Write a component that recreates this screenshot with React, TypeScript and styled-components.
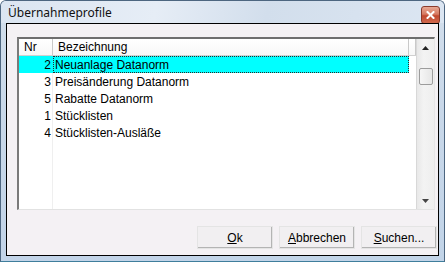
import React from 'react';
import styled, { createGlobalStyle } from 'styled-components';

const GlobalStyle = createGlobalStyle`
  html, body {
    margin: 0;
    padding: 0;
    background: #ffffff;
  }
  body {
    font-family: "Liberation Sans", Arial, sans-serif;
    font-size: 12px;
    color: #000;
  }
`;

const Window = styled.div`
  box-sizing: border-box;
  width: 445px;
  height: 262px;
  display: flex;
  flex-direction: column;
  border: 1px solid #4d6680;
  border-bottom-color: #3f7e9c;
  border-radius: 6px 6px 0 0;
  background: linear-gradient(to bottom, #d3dfec 0%, #c9d8e9 40%, #c2d4e8 100%);
`;

const TitleBar = styled.div`
  height: 22px;
  display: flex;
  align-items: center;
  padding: 0 4px 0 7px;
  background: linear-gradient(100deg, #dbe5f1 0%, #e6edf6 35%, #d2deec 60%, #dce6f2 100%);
  border-radius: 5px 5px 0 0;
`;

const Title = styled.span`
  font-family: "Noto Sans", "Open Sans", sans-serif;
  font-size: 12px;
  color: #111;
  margin-top: 1px;
`;

const CloseButton = styled.div`
  margin-left: auto;
  width: 17px;
  height: 16px;
  margin-top: 5px;
  display: flex;
  align-items: center;
  justify-content: center;
  border: 1px solid #8a3b2c;
  border-radius: 3px;
  background: linear-gradient(to bottom, #e7a893 0%, #d77a62 45%, #c2482f 55%, #d0694d 100%);
`;

const Client = styled.div`
  flex: 1;
  display: flex;
  flex-direction: column;
  margin: 0 5px 5px 5px;
  border: 1px solid #000;
  background: #f4f1f4;
  padding: 13px 0 6px 10px;
`;

const ListBox = styled.div`
  box-sizing: border-box;
  width: 418px;
  height: 173px;
  display: flex;
  border-style: solid;
  border-width: 2px 1px 1px 2px;
  border-color: #6e6e6e #e6e6e6 #e2e2e2 #7a7a7a;
  background: #fff;
`;

const ListArea = styled.div`
  flex: 1;
  display: flex;
  flex-direction: column;
  background:
    linear-gradient(to right, transparent 33px, #efefef 33px, #efefef 34px, transparent 34px);
`;

const Header = styled.div`
  display: flex;
  height: 16px;
  border-bottom: 1px solid #d0d0d0;
  background: linear-gradient(to bottom, #ffffff 0%, #f7f7f7 100%);
`;

const HeaderCell = styled.div<{ $w?: number; $grow?: boolean }>`
  box-sizing: border-box;
  ${(p) => (p.$grow ? 'flex: 1;' : `width: ${p.$w}px;`)}
  height: 16px;
  line-height: 16px;
  padding-left: 5px;
  border-right: 1px solid #c9c9c9;
  white-space: nowrap;
  overflow: hidden;
`;

const Row = styled.div<{ $selected?: boolean }>`
  display: flex;
  height: 17px;
  width: 390px;
  background: ${(p) => (p.$selected ? '#00ffff' : 'transparent')};
`;

const NrCell = styled.div`
  box-sizing: border-box;
  width: 34px;
  height: 17px;
  line-height: 17px;
  padding: 1px 2px 0 0;
  text-align: right;
`;

const NameCell = styled.div<{ $focus?: boolean }>`
  box-sizing: border-box;
  flex: 1;
  height: 17px;
  line-height: 15px;
  padding: 1px 0 0 1px;
  border: 1px dotted ${(p) => (p.$focus ? '#2a2a2a' : 'transparent')};
  white-space: nowrap;
`;

const ScrollBar = styled.div`
  width: 17px;
  display: flex;
  flex-direction: column;
  background: linear-gradient(to right, #e8e8e8 0%, #f3f3f3 40%, #eeeeee 100%);
  border-left: 1px solid #d8d8d8;
`;

const ArrowButton = styled.div`
  height: 17px;
  display: flex;
  align-items: center;
  justify-content: center;
`;

const Thumb = styled.div`
  margin: 12px 1px 0 2px;
  height: 15px;
  border: 1px solid #9c9c9c;
  border-radius: 2px;
  background: linear-gradient(to right, #f6f6f6 0%, #e6e6e6 100%);
`;

const Spacer = styled.div`
  flex: 1;
`;

const ButtonRow = styled.div`
  margin-top: 16px;
  margin-right: 1px;
  display: flex;
  justify-content: flex-end;
  gap: 6px;
`;

const Button = styled.button`
  box-sizing: border-box;
  width: 76px;
  height: 23px;
  padding: 0;
  font-family: "Liberation Sans", Arial, sans-serif;
  font-size: 12px;
  color: #000;
  background: #f1eff1;
  border-style: solid;
  border-width: 1px;
  border-color: #ffffff #6f6f6f #6f6f6f #ffffff;
  box-shadow: inset -1px -1px 0 #b4b4b4, 0 0 0 0 transparent;
  outline: 1px solid #e4e4e4;
  outline-offset: -1px;
`;

const Key = styled.u`
  text-decoration: underline;
`;

const rows = [
  { nr: 2, name: 'Neuanlage Datanorm' },
  { nr: 3, name: 'Preisänderung Datanorm' },
  { nr: 5, name: 'Rabatte Datanorm' },
  { nr: 1, name: 'Stücklisten' },
  { nr: 4, name: 'Stücklisten-Ausläße' },
];

export default function App() {
  return (
    <>
      <GlobalStyle />
      <Window>
        <TitleBar>
          <Title>Übernahmeprofile</Title>
          <CloseButton>
            <svg width="9" height="8" viewBox="0 0 9 8">
              <path d="M1.5 1 L7.5 7 M7.5 1 L1.5 7" stroke="#fff" strokeWidth="2" strokeLinecap="square" />
            </svg>
          </CloseButton>
        </TitleBar>
        <Client>
          <ListBox>
            <ListArea>
              <Header>
                <HeaderCell $w={34}>Nr</HeaderCell>
                <HeaderCell $w={356}>Bezeichnung</HeaderCell>
                <HeaderCell $grow />
              </Header>
              {rows.map((r, i) => (
                <Row key={r.nr} $selected={i === 0}>
                  <NrCell>{r.nr}</NrCell>
                  <NameCell $focus={i === 0}>{r.name}</NameCell>
                </Row>
              ))}
            </ListArea>
            <ScrollBar>
              <ArrowButton>
                <svg width="7" height="4" viewBox="0 0 7 4">
                  <path d="M0 4 L3.5 0 L7 4 Z" fill="#222" />
                </svg>
              </ArrowButton>
              <Thumb />
              <Spacer />
              <ArrowButton>
                <svg width="7" height="4" viewBox="0 0 7 4">
                  <path d="M0 0 L3.5 4 L7 0 Z" fill="#444" />
                </svg>
              </ArrowButton>
            </ScrollBar>
          </ListBox>
          <ButtonRow>
            <Button><Key>O</Key>k</Button>
            <Button><Key>A</Key>bbrechen</Button>
            <Button><Key>S</Key>uchen...</Button>
          </ButtonRow>
        </Client>
      </Window>
    </>
  );
}
